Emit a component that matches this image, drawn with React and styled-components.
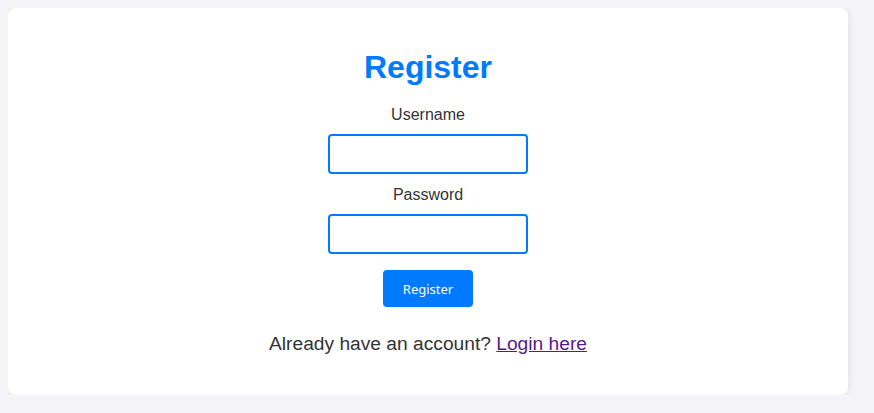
import React from "react";
import styled, { createGlobalStyle } from "styled-components";

const GlobalStyle = createGlobalStyle`
  body {
    margin: 8px;
    background: #f4f4f9;
    font-family: "Liberation Sans", Arial, sans-serif;
    color: #333;
  }
`;

const Card = styled.div`
  width: 800px;
  padding: 20px 20px 40px;
  background: #fff;
  border-radius: 8px;
  box-shadow: 0 0 10px rgba(0, 0, 0, 0.1);
  text-align: center;
`;

const Title = styled.h1`
  color: #007bff;
  font-size: 32px;
  margin: 21px 0 20px;
`;

const Form = styled.form`
  display: flex;
  flex-direction: column;
  align-items: center;
`;

const Label = styled.label`
  display: block;
  font-size: 16px;
  margin-bottom: 10px;
`;

const Input = styled.input`
  box-sizing: border-box;
  width: 200px;
  height: 40px;
  border: 2px solid #007bff;
  border-radius: 4px;
  margin-bottom: ${(p) => p.$gap}px;
  outline: none;
`;

const Button = styled.button`
  width: 90px;
  height: 37px;
  border: none;
  border-radius: 4px;
  background: #007bff;
  color: #fff;
  font-family: "Noto Sans", sans-serif;
  font-size: 13px;
  cursor: pointer;
`;

const Footer = styled.p`
  font-size: 19.2px;
  margin: 26px 0 0;
`;

const Link = styled.a`
  color: #551a8b;
`;

export default function App() {
  return (
    <>
      <GlobalStyle />
      <Card>
        <Title>Register</Title>
        <Form onSubmit={(e) => e.preventDefault()}>
          <Label>Username</Label>
          <Input type="text" $gap={12} />
          <Label>Password</Label>
          <Input type="password" $gap={16} />
          <Button type="submit">Register</Button>
        </Form>
        <Footer>
          Already have an account? <Link href="#">Login here</Link>
        </Footer>
      </Card>
    </>
  );
}
